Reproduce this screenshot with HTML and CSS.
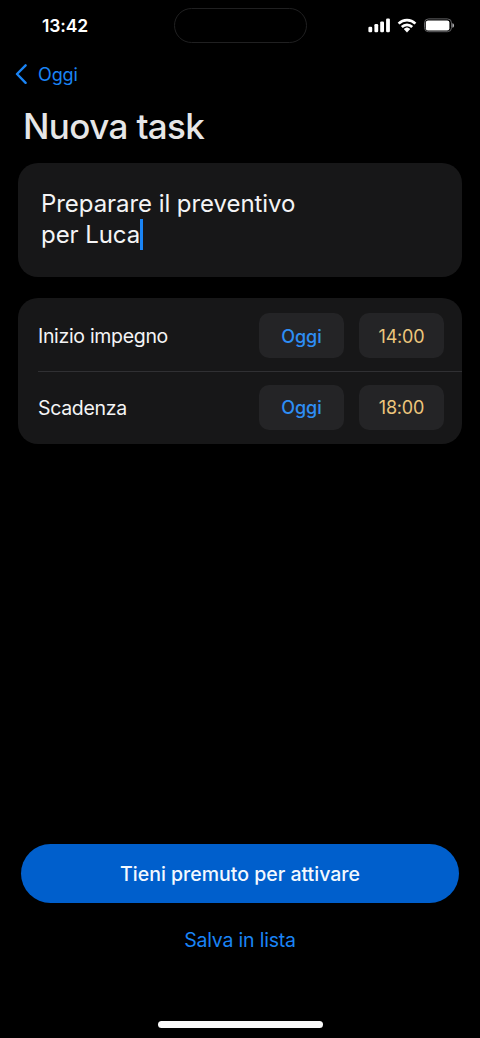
FILE: index.html
```html
<!DOCTYPE html>
<html lang="it">
<head>
<meta charset="utf-8">
<meta name="viewport" content="width=device-width">
<title>Nuova task</title>
<link rel="stylesheet" href="styles.css">
</head>
<body>
<main class="screen">
  <header class="status">
    <time class="clock">13:42</time>
    <div class="island"></div>
    <svg class="indicators" width="88" height="18" viewBox="0 0 88 18" aria-hidden="true">
      <g fill="#fff">
        <rect x="0.4" y="9.7" width="3.8" height="5.6" rx="1.2"/>
        <rect x="6.4" y="7" width="3.8" height="8.3" rx="1.2"/>
        <rect x="12.2" y="4.4" width="3.8" height="10.9" rx="1.2"/>
        <rect x="18.1" y="1.6" width="3.8" height="13.7" rx="1.2"/>
      </g>
      <g fill="none" stroke="#fff" stroke-width="2.7">
        <path d="M30.6 6.6a12 12 0 0 1 16.8 0"/>
        <path d="M33.8 10a7.4 7.4 0 0 1 10.4 0"/>
      </g>
      <path d="M36.1 12.1a4.2 4.2 0 0 1 5.8 0L39 15.2z" fill="#fff" stroke="#fff" stroke-width=".6" stroke-linejoin="round"/>
      <rect x="56.5" y="1.9" width="27" height="12.8" rx="4" fill="none" stroke="#626264"/>
      <rect x="57.8" y="3.4" width="23.6" height="10" rx="2.2" fill="#fff"/>
      <path d="M84.4 6.2c2.2.5 2.2 4 0 4.5z" fill="#b0b0b2"/>
    </svg>
  </header>
  <nav class="nav">
    <a class="back">
      <svg width="12" height="22" viewBox="0 0 12 22" aria-hidden="true"><path d="M10.6 2.3 2 11l8.6 8.8" fill="none" stroke="#1a84f5" stroke-width="2.4" stroke-linecap="round" stroke-linejoin="round"/></svg>
      <span>Oggi</span>
    </a>
  </nav>
  <h1 class="title">Nuova task</h1>
  <section class="card note">Preparare il preventivo<br>per Luca<span class="caret"></span></section>
  <section class="card schedule">
    <div class="row">
      <span class="label">Inizio impegno</span>
      <button class="chip day">Oggi</button>
      <button class="chip hour">14:00</button>
    </div>
    <div class="row">
      <span class="label">Scadenza</span>
      <button class="chip day">Oggi</button>
      <button class="chip hour">18:00</button>
    </div>
  </section>
  <footer class="actions">
    <button class="primary">Tieni premuto per attivare</button>
    <button class="secondary">Salva in lista</button>
    <div class="home"></div>
  </footer>
</main>
</body>
</html>
```
FILE: styles.css
```css
* { box-sizing: border-box; }

body {
  margin: 0;
  background: #000;
  color: #f4f4f5;
  font-family: Inter, "Liberation Sans", sans-serif;
}

button {
  margin: 0;
  padding: 0;
  border: 0;
  background: none;
  font-family: inherit;
}

.screen {
  display: flex;
  flex-direction: column;
  width: 480px;
  height: 1038px;
  overflow: hidden;
}

.status {
  display: grid;
  grid-template-columns: 174px 133px 1fr;
  height: 50px;
  padding-top: 8px;
}

.clock {
  padding-left: 42px;
  font-size: 17.5px;
  font-weight: 600;
  letter-spacing: -0.1px;
  line-height: 36px;
  color: #fff;
}

.island {
  height: 35px;
  border: 1px solid #202021;
  border-radius: 18px;
}

.indicators {
  margin: 9px 0 0 61px;
}

.nav {
  height: 50px;
  padding: 13px 0 0 15px;
}

.back {
  display: flex;
  align-items: center;
  gap: 11px;
  height: 22px;
  font-size: 18px;
  letter-spacing: -0.1px;
  color: #1a84f5;
}

.title {
  margin: 4px 0 0 23px;
  height: 59px;
  font-size: 35px;
  font-weight: 500;
  letter-spacing: -0.62px;
  line-height: 45px;
  color: #e6e6e7;
}

.card {
  margin: 0 18px;
  border-radius: 20px;
  background: #171718;
}

.note {
  height: 114px;
  padding: 25px 23px;
  font-size: 24px;
  letter-spacing: -0.06px;
  line-height: 31px;
}

.caret {
  display: inline-block;
  width: 3px;
  height: 31px;
  margin: -8px 0 -8px -0.5px;
  vertical-align: 1px;
  background: #1a84f5;
}

.schedule {
  margin-top: 21px;
  height: 146px;
  padding-left: 20px;
}

.row {
  display: flex;
  align-items: center;
  height: 73px;
  padding: 2px 18px 0 0;
}

.row + .row {
  height: 72px;
  padding: 0 18px 0 0;
  border-top: 1px solid #303033;
}

.label {
  flex: 1;
  font-size: 19.5px;
  letter-spacing: -0.32px;
}

.chip {
  width: 85px;
  height: 45px;
  padding-top: 1px;
  border-radius: 10px;
  background: #242426;
  font-size: 18px;
  letter-spacing: -0.2px;
}

.row + .row .chip { padding-top: 0; }

.day {
  margin-right: 15px;
  font-weight: 500;
  letter-spacing: 0;
  color: #2e8ef5;
}

.hour { color: #edc67c; }

.actions {
  display: flex;
  flex-direction: column;
  align-items: center;
  margin-top: auto;
  padding-bottom: 10px;
}

.primary {
  width: 438px;
  height: 59px;
  border-radius: 30px;
  background: #005fcc;
  font-size: 19.5px;
  font-weight: 500;
  letter-spacing: 0;
  color: #f3f9ff;
}

.secondary {
  height: 30px;
  margin: 22px 0 66px;
  font-size: 19.5px;
  letter-spacing: -0.2px;
  color: #1a84f5;
}

.home {
  width: 165px;
  height: 7px;
  border-radius: 4px;
  background: #fafafa;
}
```
